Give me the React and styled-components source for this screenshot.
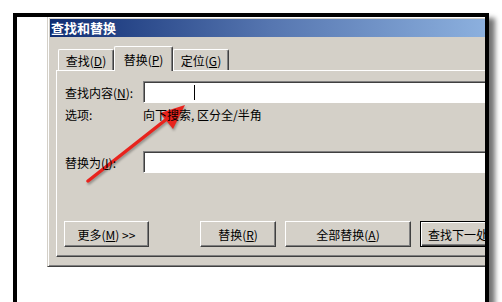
import React from 'react'
import styled, { createGlobalStyle } from 'styled-components'

const GlobalStyle = createGlobalStyle`
    html, body {
        margin: 0;
        padding: 0;
        background: #fff;
        overflow: hidden;
    }
    body {
        font-family: "Noto Sans CJK SC", "Noto Sans", sans-serif;
        font-size: 12px;
        color: #000;
    }
`

const Page = styled.div`
    position: relative;
    width: 502px;
    height: 302px;
    overflow: hidden;
`

const Frame = styled.div`
    box-sizing: border-box;
    margin: 13px 0 0 13px;
    width: 476px;
    height: 320px;
    border: 4px solid #000;
    border-bottom: none;
    background: #fff;
    padding-left: 30px;
    overflow: hidden;
    box-shadow: 6px 5px 5px rgba(0, 0, 0, 0.55);
`

const Dialog = styled.div`
    box-sizing: border-box;
    width: 540px;
    height: 250px;
    background: #d4d0c8;
    border-left: 1px solid #d4d0c8;
    border-bottom: 1px solid #404040;
    box-shadow: inset 1px 1px #fff, inset 0 -1px #808080;
    padding: 2px 0 0 2px;
`

const TitleBar = styled.div`
    height: 18px;
    line-height: 18px;
    padding-left: 1px;
    color: #fff;
    font-weight: bold;
    font-size: 13px;
    background: linear-gradient(to right, #0f2d73 0px, #5676b0 220px, #8cb0de 435px);
`

const Body = styled.div`
    padding: 9px 0 0 6px;
`

const TabRow = styled.div`
    display: flex;
    align-items: flex-end;
    height: 24px;
    padding-left: 2px;
`

const Tab = styled.div`
    position: relative;
    z-index: ${p => (p.$active ? 2 : 1)};
    box-sizing: border-box;
    width: ${p => p.$w}px;
    height: ${p => (p.$active ? 25 : 21)}px;
    margin-bottom: ${p => (p.$active ? -1 : 0)}px;
    padding-top: ${p => (p.$active ? 0 : 1)}px;
    background: #d4d0c8;
    border-top: 1px solid #fff;
    border-left: 1px solid #fff;
    border-right: 1px solid #404040;
    border-radius: 2px 2px 0 0;
    box-shadow: inset -1px 0 #808080;
    display: flex;
    align-items: center;
    justify-content: center;
`

const Panel = styled.div`
    position: relative;
    z-index: 1;
    box-sizing: border-box;
    width: 520px;
    height: 187px;
    border-top: 1px solid #fff;
    border-left: 1px solid #fff;
    border-bottom: 1px solid #404040;
    box-shadow: inset 0 -1px #808080;
    padding: 10px 0 0 8px;
`

const FieldRow = styled.div`
    display: flex;
    align-items: center;
    height: ${p => p.$h}px;
    margin-top: ${p => p.$top || 0}px;
`

const Label = styled.div`
    width: 78px;
    flex-shrink: 0;
    white-space: nowrap;
`

const TextField = styled.div`
    box-sizing: border-box;
    flex: 1;
    height: 22px;
    margin-right: 12px;
    background: #fff;
    border-top: 1px solid #808080;
    border-left: 1px solid #808080;
    border-bottom: 1px solid #fff;
    border-right: 1px solid #fff;
    box-shadow: inset 1px 1px #404040;
    display: flex;
    align-items: center;
`

const Caret = styled.span`
    width: 1px;
    height: 15px;
    margin-left: 50px;
    background: #000;
`

const ButtonRow = styled.div`
    display: flex;
    margin: 48px 0 0 -1px;
`

const Button = styled.div`
    box-sizing: border-box;
    flex-shrink: 0;
    width: ${p => p.$w}px;
    height: 26px;
    margin-left: ${p => p.$gap || 0}px;
    background: #d4d0c8;
    border-top: 1px solid #fff;
    border-left: 1px solid #fff;
    border-right: 1px solid #404040;
    border-bottom: 1px solid #404040;
    box-shadow: inset -1px -1px #808080;
    display: flex;
    align-items: center;
    justify-content: center;
    white-space: nowrap;
`

const DefaultButton = styled(Button)`
    border: 1px solid #000;
    box-shadow: inset 1px 1px #fff, inset -1px -1px #404040, inset -2px -2px #808080;
    justify-content: flex-start;
    padding-left: 7px;
`

const Arrow = styled.svg`
    position: absolute;
    left: 0;
    top: 0;
    pointer-events: none;
    filter: drop-shadow(1px 2px 1px rgba(0, 0, 0, 0.3));
`

export default function App() {
    return (
        <Page>
            <GlobalStyle />
            <Frame>
                <Dialog>
                    <TitleBar>查找和替换</TitleBar>
                    <Body>
                        <TabRow>
                            <Tab $w={56}>查找(<u>D</u>)</Tab>
                            <Tab $w={59} $active>替换(<u>P</u>)</Tab>
                            <Tab $w={56}>定位(<u>G</u>)</Tab>
                        </TabRow>
                        <Panel>
                            <FieldRow $h={22}>
                                <Label>查找内容(<u>N</u>):</Label>
                                <TextField><Caret /></TextField>
                            </FieldRow>
                            <FieldRow $h={16} $top={3}>
                                <Label>选项:</Label>
                                <span>向下搜索, 区分全/半角</span>
                            </FieldRow>
                            <FieldRow $h={22} $top={29}>
                                <Label>替换为(<u>I</u>):</Label>
                                <TextField />
                            </FieldRow>
                            <ButtonRow>
                                <Button $w={85}>更多(<u>M</u>) &gt;&gt;</Button>
                                <Button $w={76} $gap={51}>替换(<u>R</u>)</Button>
                                <Button $w={126} $gap={9}>全部替换(<u>A</u>)</Button>
                                <DefaultButton $w={90} $gap={9}>查找下一处(<u>F</u>)</DefaultButton>
                            </ButtonRow>
                        </Panel>
                    </Body>
                </Dialog>
            </Frame>
            <Arrow width="502" height="302" viewBox="0 0 502 302">
                <line x1="88" y1="181" x2="168" y2="118" stroke="#e8231d" strokeWidth="3.5" strokeLinecap="round" />
                <polygon points="185,105 173,129 160,113" fill="#e8231d" />
            </Arrow>
        </Page>
    )
}
